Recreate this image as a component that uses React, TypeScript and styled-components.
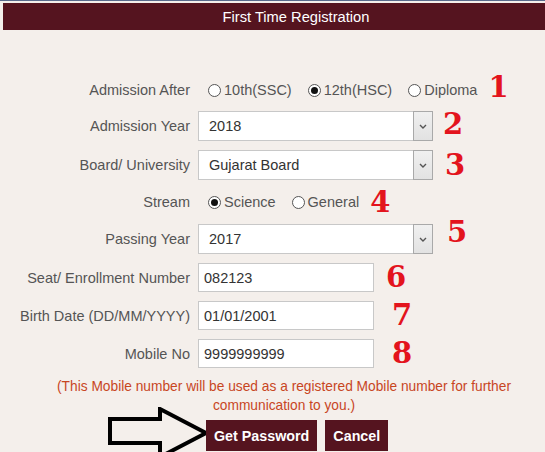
import React from "react";
import styled, { createGlobalStyle } from "styled-components";

const GlobalStyle = createGlobalStyle`
  html, body {
    margin: 0;
    padding: 0;
    overflow: hidden;
    background: #f4efeb;
  }
  body {
    font-family: "Liberation Sans", Arial, sans-serif;
    font-size: 14.5px;
    color: #555;
  }
`;

const Page = styled.div`
  border-top: 1px solid #5a6b8c;
  padding: 2px 0 0 3px;
  height: 449px;
`;

const Header = styled.div`
  height: 27px;
  background: #55141f;
  color: #fff;
  font-size: 14.7px;
  display: flex;
  align-items: center;
  justify-content: center;
  padding-left: 44px;
`;

const Form = styled.div`
  display: grid;
  grid-template-columns: 187px 1fr;
  column-gap: 8px;
  row-gap: 9px;
  align-items: center;
  margin-top: 48px;
`;

const Label = styled.div`
  text-align: right;
  color: #555;
  white-space: nowrap;
`;

const Cell = styled.div<{ $h: number }>`
  display: flex;
  align-items: center;
  height: ${(p) => p.$h}px;
`;

const RadioOption = styled.label<{ $gap: number }>`
  display: flex;
  align-items: center;
  gap: 3px;
  margin-left: ${(p) => p.$gap}px;
  color: #555;
  white-space: nowrap;
`;

const RadioDot = styled.span<{ $on?: boolean }>`
  width: 13px;
  height: 13px;
  box-sizing: border-box;
  border: 1px solid #555;
  border-radius: 50%;
  background: #fff;
  display: flex;
  align-items: center;
  justify-content: center;

  &::after {
    content: "";
    width: 7px;
    height: 7px;
    border-radius: 50%;
    background: ${(p) => (p.$on ? "#111" : "transparent")};
  }
`;

const SelectBox = styled.div`
  width: 235px;
  height: 30px;
  box-sizing: border-box;
  border: 1px solid #c8c8c8;
  background: #fff;
  display: flex;
  align-items: stretch;
  color: #333;
`;

const SelectValue = styled.span`
  flex: 1;
  display: flex;
  align-items: center;
  padding-left: 10px;
`;

const DropButton = styled.span`
  width: 20px;
  box-sizing: border-box;
  border: 1px solid #a9a9a9;
  margin: -1px -1px -1px 0;
  background: linear-gradient(#f0f0f0, #e2e2e2);
  display: flex;
  align-items: center;
  justify-content: center;
`;

const TextInput = styled.div`
  width: 176px;
  height: 100%;
  box-sizing: border-box;
  border: 1px solid #c8c8c8;
  background: #fff;
  color: #333;
  display: flex;
  align-items: center;
  padding-left: 5px;
`;

const Marker = styled.span<{ $gap: number; $dy?: number }>`
  font-family: "DejaVu Serif", "Liberation Serif", serif;
  font-weight: bold;
  font-size: 29px;
  color: #e3141d;
  margin-left: ${(p) => p.$gap}px;
  position: relative;
  top: ${(p) => p.$dy ?? 0}px;
  line-height: 1;
`;

const Note = styled.p`
  margin: 9px 0 0;
  padding-left: 20px;
  text-align: center;
  color: #c8461f;
  font-size: 13.75px;
  line-height: 19px;
`;

const ButtonRow = styled.div`
  display: flex;
  align-items: flex-start;
  margin-top: 5px;
  padding-left: 105px;
  gap: 8px;
`;

const Arrow = styled.svg`
  margin-top: -13px;
  margin-right: -20px;
  flex: none;
`;

const Button = styled.button`
  height: 31px;
  padding: 0 8px;
  border: none;
  background: #55141f;
  color: #fff;
  font-family: "Liberation Sans", Arial, sans-serif;
  font-weight: bold;
  font-size: 14.3px;
`;

function Chevron() {
  return (
    <svg width="8" height="5" viewBox="0 0 8 5">
      <path d="M1 1 L4 4 L7 1" fill="none" stroke="#555" strokeWidth="1.4" />
    </svg>
  );
}

function Radio({ label, on, gap }: { label: string; on?: boolean; gap: number }) {
  return (
    <RadioOption $gap={gap}>
      <RadioDot $on={on} />
      {label}
    </RadioOption>
  );
}

function Select({ value }: { value: string }) {
  return (
    <SelectBox>
      <SelectValue>{value}</SelectValue>
      <DropButton>
        <Chevron />
      </DropButton>
    </SelectBox>
  );
}

export default function App() {
  return (
    <>
      <GlobalStyle />
      <Page>
        <Header>First Time Registration</Header>
        <Form>
          <Label>Admission After</Label>
          <Cell $h={24}>
            <Radio label="10th(SSC)" gap={10} />
            <Radio label="12th(HSC)" gap={16} on />
            <Radio label="Diploma" gap={16} />
            <Marker $gap={11} $dy={-3}>1</Marker>
          </Cell>

          <Label>Admission Year</Label>
          <Cell $h={30}>
            <Select value="2018" />
            <Marker $gap={10} $dy={-2}>2</Marker>
          </Cell>

          <Label>Board/ University</Label>
          <Cell $h={30}>
            <Select value="Gujarat Board" />
            <Marker $gap={12}>3</Marker>
          </Cell>

          <Label>Stream</Label>
          <Cell $h={26}>
            <Radio label="Science" gap={10} on />
            <Radio label="General" gap={16} />
            <Marker $gap={11}>4</Marker>
          </Cell>

          <Label>Passing Year</Label>
          <Cell $h={30}>
            <Select value="2017" />
            <Marker $gap={14} $dy={-7}>5</Marker>
          </Cell>

          <Label>Seat/ Enrollment Number</Label>
          <Cell $h={29}>
            <TextInput>082123</TextInput>
            <Marker $gap={12}>6</Marker>
          </Cell>

          <Label>Birth Date (DD/MM/YYYY)</Label>
          <Cell $h={29}>
            <TextInput>01/01/2001</TextInput>
            <Marker $gap={18}>7</Marker>
          </Cell>

          <Label>Mobile No</Label>
          <Cell $h={29}>
            <TextInput>9999999999</TextInput>
            <Marker $gap={18}>8</Marker>
          </Cell>
        </Form>
        <Note>
          (This Mobile number will be used as a registered Mobile number for further
          <br />
          communication to you.)
        </Note>
        <ButtonRow>
          <Arrow width="110" height="52" viewBox="0 0 110 52">
            <path
              d="M2 12 L52 12 L52 2 L98 26 L52 50 L52 36 L2 36 Z"
              fill="none"
              stroke="#000"
              strokeWidth="4"
              strokeLinejoin="miter"
            />
          </Arrow>
          <Button>Get Password</Button>
          <Button>Cancel</Button>
        </ButtonRow>
      </Page>
    </>
  );
}
